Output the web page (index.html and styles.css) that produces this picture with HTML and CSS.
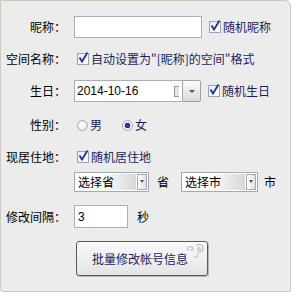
FILE: index.html
```html
<!DOCTYPE html>
<html lang="zh-CN">
<head>
  <meta charset="UTF-8" />
  <title>批量修改帐号信息</title>
  <link rel="stylesheet" href="styles.css">
</head>
<body>
  <div class="panel">
    <div class="row row-nick">
      <label class="label">昵称：</label>
      <div class="textbox nick"></div>
      <span class="check gap-left">
        <span class="box"><svg viewBox="0 0 12 12" width="12" height="12"><path d="M2.5 5.5 L5 9.5 L10.5 0.5" fill="none" stroke="#1f3397" stroke-width="1.8"/></svg></span>
        <span class="ctext">随机昵称</span>
      </span>
    </div>

    <div class="row row-space">
      <label class="label">空间名称：</label>
      <span class="check">
        <span class="box"><svg viewBox="0 0 12 12" width="12" height="12"><path d="M2.5 5.5 L5 9.5 L10.5 0.5" fill="none" stroke="#1f3397" stroke-width="1.8"/></svg></span>
        <span class="ctext">自动设置为"[昵称]的空间"格式</span>
      </span>
    </div>

    <div class="row row-birth">
      <label class="label">生日：</label>
      <div class="textbox date">
        <span class="date-text">2014-10-16</span>
        <span class="cal"></span>
      </div>
      <div class="drop-btn"><span class="arrow"></span></div>
      <span class="check gap-left">
        <span class="box"><svg viewBox="0 0 12 12" width="12" height="12"><path d="M2.5 5.5 L5 9.5 L10.5 0.5" fill="none" stroke="#1f3397" stroke-width="1.8"/></svg></span>
        <span class="ctext">随机生日</span>
      </span>
    </div>

    <div class="row row-sex">
      <label class="label">性别：</label>
      <span class="radio"><span class="dot"></span><span class="ctext">男</span></span>
      <span class="radio on"><span class="dot"></span><span class="ctext">女</span></span>
    </div>

    <div class="row row-home">
      <label class="label">现居住地：</label>
      <span class="check">
        <span class="box"><svg viewBox="0 0 12 12" width="12" height="12"><path d="M2.5 5.5 L5 9.5 L10.5 0.5" fill="none" stroke="#1f3397" stroke-width="1.8"/></svg></span>
        <span class="ctext">随机居住地</span>
      </span>
    </div>

    <div class="row row-area">
      <span class="label"></span>
      <div class="combo prov">
        <span class="combo-text">选择省</span>
        <span class="combo-btn"><span class="arrow"></span></span>
      </div>
      <span class="unit u-prov">省</span>
      <div class="combo city">
        <span class="combo-text">选择市</span>
        <span class="combo-btn"><span class="arrow"></span></span>
      </div>
      <span class="unit u-city">市</span>
    </div>

    <div class="row row-gap">
      <label class="label">修改间隔：</label>
      <div class="textbox interval"><span class="num">3</span></div>
      <span class="unit u-sec">秒</span>
    </div>

    <div class="row row-btn">
      <span class="label"></span>
      <button class="submit">
        批量修改帐号信息
        <svg class="swirl" viewBox="0 0 20 16" width="20" height="16">
          <path d="M3 8 C1 4 6 2 8 5 C9 7 6 8 6 6" fill="none" stroke="#c8c8c8" stroke-width="1.6"/>
          <path d="M11 3 C14 0 19 2 18 6 C17 10 12 9 13 6 C14 4 16 5 15 7" fill="none" stroke="#c8c8c8" stroke-width="1.6"/>
          <path d="M9 14 C12 15 14 12 12 10" fill="none" stroke="#c8c8c8" stroke-width="1.4"/>
        </svg>
      </button>
    </div>
  </div>
</body>
</html>
```

FILE: styles.css
```css
body {
  margin: 0;
  background: #ffffff;
  font-family: "Noto Sans CJK SC", "Liberation Sans", sans-serif;
  font-size: 12px;
  color: #000;
}

.panel {
  width: 289px;
  height: 275px;
  background: #ececec;
  border: 1px solid #c9ccbd;
  border-radius: 0 6px 0 3px;
  padding-top: 15px;
}

.row {
  display: flex;
  align-items: center;
}

.label {
  width: 65px;
  margin-right: 8px;
  text-align: right;
  white-space: nowrap;
  line-height: 14px;
}

.row-nick { height: 22px; }
.row-space { height: 42px; }
.row-birth { height: 22px; }
.row-sex { height: 46px; }
.row-home { height: 18px; }
.row-area { height: 20px; margin-top: 6px; }
.row-gap { height: 23px; margin-top: 13px; }
.row-btn { height: 35px; margin-top: 13px; }

.textbox {
  height: 22px;
  box-sizing: border-box;
  background: #fff;
  border: 1px solid #a7afb8;
  display: flex;
  align-items: center;
}

.nick { width: 128px; }

.date {
  width: 108px;
  border-right: none;
  justify-content: space-between;
  padding: 0 3px 0 2px;
}

.date-text {
  font-family: "Liberation Sans", sans-serif;
  font-size: 12px;
  color: #000;
}

.cal {
  width: 4px;
  height: 9px;
  border: 1px solid #999;
  border-right: none;
  background: #e4e4e4;
}

.drop-btn {
  width: 19px;
  height: 22px;
  box-sizing: border-box;
  border: 1px solid #9ea3a8;
  border-radius: 0 2px 2px 0;
  background: linear-gradient(#fbfbfb, #dcdcdc);
  display: flex;
  align-items: center;
  justify-content: center;
}

.arrow {
  width: 0;
  height: 0;
  border-left: 3px solid transparent;
  border-right: 3px solid transparent;
  border-top: 3px solid #555;
}

.check {
  display: flex;
  align-items: center;
  margin-left: 3px;
}

.gap-left { margin-left: 7px; }

.box {
  width: 12px;
  height: 12px;
  box-sizing: border-box;
  border: 1px solid #9aa3b2;
  background: linear-gradient(135deg, #e9ecf2, #ffffff);
  display: flex;
  align-items: center;
  justify-content: center;
  margin-right: 2px;
}

.box svg {
  display: block;
  margin-top: -2px;
  overflow: visible;
}

.ctext {
  color: #1d1d5c;
  white-space: nowrap;
  line-height: 14px;
}

.radio {
  display: flex;
  align-items: center;
  margin-left: 3px;
  margin-right: 17px;
}

.dot {
  width: 11px;
  height: 11px;
  box-sizing: border-box;
  border-radius: 50%;
  border: 1px solid #a4aab4;
  background: radial-gradient(circle at 40% 40%, #ffffff, #d8dde6);
  margin-right: 2px;
}

.radio.on .dot {
  background: radial-gradient(circle, #3848b8 0, #1a2a8a 2.5px, #dfe3ec 3px, #ffffff 5px);
}

.combo {
  height: 20px;
  box-sizing: border-box;
  border: 1px solid #a2a9b2;
  background: #fff;
  display: flex;
  padding: 1px;
}

.prov { width: 75px; }
.city { width: 77px; }

.combo-text {
  flex: 1;
  background: linear-gradient(to right, #ffffff 40%, #d8d8d8);
  padding-left: 2px;
  line-height: 16px;
  color: #000;
}

.combo-btn {
  width: 10px;
  margin-left: 1px;
  border: 1px solid #a2a9b2;
  box-sizing: border-box;
  background: linear-gradient(to right, #fdfdfd, #e0e0e0);
  display: flex;
  align-items: flex-start;
  justify-content: center;
  padding-top: 5px;
}

.combo-btn .arrow {
  border-left-width: 2px;
  border-right-width: 2px;
}

.unit {
  line-height: 14px;
}

.u-prov { margin: 0 12px 0 8px; }
.u-city { margin-left: 6px; }
.u-sec { margin-left: 9px; }

.interval {
  width: 54px;
  height: 23px;
  padding-left: 3px;
}

.num {
  font-family: "Liberation Sans", sans-serif;
  font-size: 12px;
}

.submit {
  position: relative;
  width: 132px;
  height: 35px;
  margin-left: 2px;
  border: 1px solid #5a5a5a;
  border-radius: 3px;
  background: linear-gradient(#fafafa, #e4e4e4);
  font-family: "Noto Sans CJK SC", sans-serif;
  font-size: 12px;
  color: #1d1d5c;
  padding: 0 4px 0 0;
  box-shadow: 1px 1px 0 #b8b8b8;
}

.swirl {
  position: absolute;
  right: 2px;
  top: 1px;
}
```
